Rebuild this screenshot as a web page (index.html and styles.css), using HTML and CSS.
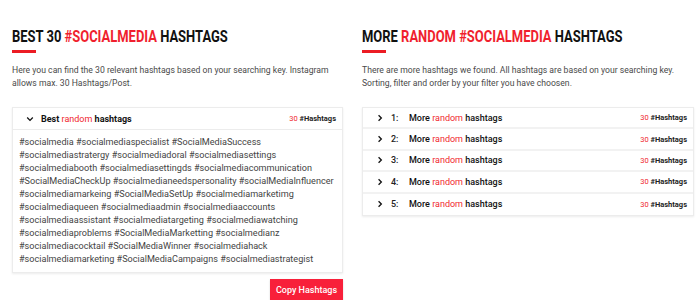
FILE: index.html
```html
<!DOCTYPE html>
<html>
<head>
<meta charset="utf-8">
<link rel="stylesheet" href="styles.css">
</head>
<body>
<div class="page">
  <section class="col">
    <h2 class="title"><span class="squeeze">BEST 30 <span class="red">#SOCIALMEDIA</span> HASHTAGS</span></h2>
    <div class="bar"></div>
    <p class="intro">Here you can find the 30 relevant hashtags based on your searching key. Instagram allows max. 30 Hashtags/Post.</p>
    <div class="box">
      <div class="row head">
        <svg class="chev" viewBox="0 0 10 10" width="8" height="8"><path d="M1.5 3.2 L5 6.7 L8.5 3.2" fill="none" stroke="#111" stroke-width="1.6"/></svg>
        <span class="label">Best <span class="red">random</span> hashtags</span>
        <span class="count"><span class="red">30</span> #Hashtags</span>
      </div>
      <div class="tags">#socialmedia #socialmediaspecialist #SocialMediaSuccess<br>#socialmediastratergy #socialmediadoral #socialmediasettings<br>#socialmediabooth #socialmediasettingds #socialmediacommunication<br>#SocialMediaCheckUp #socialmedianeedspersonality #socialMediaInfluencer<br>#socialmediamarkeing #SocialMediaSetUp #socialmediamarketimg<br>#socialmediaqueen #socialmediaadmin #socialmediaaccounts<br>#socialmediaassistant #socialmediatargeting #socialmediawatching<br>#socialmediaproblems #SocialMediaMarketting #socialmedianz<br>#socialmediacocktail #SocialMediaWinner #socialmediahack<br>#socialmediamarketing #SocialMediaCampaigns #socialmediastrategist</div>
    </div>
    <div class="actions"><button class="copy">Copy Hashtags</button></div>
  </section>
  <section class="col">
    <h2 class="title"><span class="squeeze">MORE <span class="red">RANDOM #SOCIALMEDIA</span> HASHTAGS</span></h2>
    <div class="bar"></div>
    <p class="intro">There are more hashtags we found. All hashtags are based on your searching key. Sorting, filter and order by your filter you have choosen.</p>
    <div class="list">
      <div class="row item"><svg class="chev" viewBox="0 0 10 10" width="8" height="8"><path d="M3.2 1.5 L6.7 5 L3.2 8.5" fill="none" stroke="#111" stroke-width="1.6"/></svg><span class="num">1:</span><span class="label">More <span class="red">random</span> hashtags</span><span class="count"><span class="red">30</span> #Hashtags</span></div>
      <div class="row item"><svg class="chev" viewBox="0 0 10 10" width="8" height="8"><path d="M3.2 1.5 L6.7 5 L3.2 8.5" fill="none" stroke="#111" stroke-width="1.6"/></svg><span class="num">2:</span><span class="label">More <span class="red">random</span> hashtags</span><span class="count"><span class="red">30</span> #Hashtags</span></div>
      <div class="row item"><svg class="chev" viewBox="0 0 10 10" width="8" height="8"><path d="M3.2 1.5 L6.7 5 L3.2 8.5" fill="none" stroke="#111" stroke-width="1.6"/></svg><span class="num">3:</span><span class="label">More <span class="red">random</span> hashtags</span><span class="count"><span class="red">30</span> #Hashtags</span></div>
      <div class="row item"><svg class="chev" viewBox="0 0 10 10" width="8" height="8"><path d="M3.2 1.5 L6.7 5 L3.2 8.5" fill="none" stroke="#111" stroke-width="1.6"/></svg><span class="num">4:</span><span class="label">More <span class="red">random</span> hashtags</span><span class="count"><span class="red">30</span> #Hashtags</span></div>
      <div class="row item"><svg class="chev" viewBox="0 0 10 10" width="8" height="8"><path d="M3.2 1.5 L6.7 5 L3.2 8.5" fill="none" stroke="#111" stroke-width="1.6"/></svg><span class="num">5:</span><span class="label">More <span class="red">random</span> hashtags</span><span class="count"><span class="red">30</span> #Hashtags</span></div>
    </div>
  </section>
</div>
</body>
</html>
```
FILE: styles.css
```css
* { box-sizing: border-box; }
html, body { margin: 0; padding: 0; background: #fff; }
body { font-family: Roboto, "Liberation Sans", sans-serif; color: #222; }
.page {
  display: grid;
  grid-template-columns: 331px 332px;
  column-gap: 19px;
  padding: 29px 6px 0 12px;
  align-items: start;
}
.title {
  margin: 0;
  font-size: 16px;
  line-height: 16px;
  height: 16px;
  font-weight: 700;
  color: #111;
  white-space: nowrap;
}
.squeeze {
  display: inline-block;
  transform: scaleX(0.81);
  transform-origin: left center;
}
.red { color: #f01f2e; }
.bar { width: 24px; height: 3px; background: #ec1c24; margin-top: 5px; }
.intro {
  margin: 11px 0 0;
  font-size: 8.65px;
  line-height: 13px;
  color: #4a4a4a;
  height: 26px;
}
.box, .list {
  margin-top: 17px;
  border: 1px solid #ececec;
  box-shadow: 0 1px 2px rgba(0,0,0,0.08);
  background: #fff;
}
.row {
  display: flex;
  align-items: center;
  height: 22px;
  padding: 0 6px 0 13px;
  font-size: 9px;
}
.head { border-bottom: 1px solid #ececec; }
.chev { flex: none; }
.head .label { margin-left: 7px; font-weight: 700; color: #111; }
.label .red { font-weight: 400; }
.count { margin-left: auto; font-size: 7.5px; font-weight: 700; color: #222; }
.count .red { font-weight: 400; }
.tags {
  padding: 6px 6px 6px 6px;
  font-size: 9.1px;
  line-height: 13px;
  color: #444;
}
.actions { display: flex; justify-content: flex-end; margin-top: 6px; }
.copy {
  font-family: Roboto, "Liberation Sans", sans-serif;
  background: #f8203a;
  color: #fff;
  border: none;
  width: 73px;
  height: 21px;
  font-size: 9px;
  font-weight: 500;
  padding: 0;
  box-shadow: 0 1px 2px rgba(0,0,0,0.15);
}
.item { border-bottom: 2px solid #f2f2f2; height: 21.4px; }
.item:last-child { border-bottom: none; }
.item .num { margin-left: 7px; width: 18px; font-weight: 500; color: #222; }
.item .label { font-weight: 500; color: #111; }
```
